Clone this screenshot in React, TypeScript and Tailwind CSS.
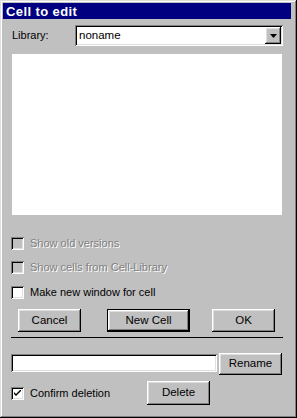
import React from "react";

const raised =
  "shadow-[inset_-1px_-1px_0_#000,inset_1px_1px_0_#fff,inset_-2px_-2px_0_#808080,inset_2px_2px_0_#dfdfdf]";
const sunken =
  "shadow-[inset_1px_1px_0_#808080,inset_-1px_-1px_0_#fff,inset_2px_2px_0_#000,inset_-2px_-2px_0_#dfdfdf]";

function Button({ label, className = "", isDefault = false }: { label: string; className?: string; isDefault?: boolean }) {
  return (
    <button
      className={`flex items-center justify-center bg-[#c0c0c0] text-black text-[11.5px] ${
        isDefault ? "border border-black " + raised : raised
      } ${className}`}
    >
      {label}
    </button>
  );
}

function Checkbox({ label, checked = false, disabled = false }: { label: string; checked?: boolean; disabled?: boolean }) {
  return (
    <div className="flex items-center h-[13px] ml-[11px]">
      <div
        className={`w-[13px] h-[13px] flex items-center justify-center ${sunken} ${
          disabled ? "bg-[#c0c0c0]" : "bg-white"
        }`}
      >
        {checked && (
          <svg width="7" height="7" viewBox="0 0 7 7">
            <path d="M0 2 L0 4 L2 6 L7 1 L7 -1 L2 4 Z" fill="#000" />
          </svg>
        )}
      </div>
      <span
        className={`ml-[6px] text-[11px] leading-none ${
          disabled ? "text-[#808080] [text-shadow:1px_1px_0_#fff]" : "text-black"
        }`}
      >
        {label}
      </span>
    </div>
  );
}

export default function App() {
  return (
    <div
      className="w-[297px] h-[418px] bg-[#c0c0c0] flex flex-col shadow-[inset_-1px_-1px_0_#000,inset_1px_1px_0_#dfdfdf,inset_-2px_-2px_0_#808080,inset_2px_2px_0_#fff]"
      style={{ fontFamily: '"Liberation Sans", Arial, sans-serif' }}
    >
      {/* Title bar */}
      <div className="mt-[3px] ml-[3px] w-[288px] h-[16px] bg-[#000080] flex items-center pl-[3px]">
        <span className="text-white font-bold text-[13px] tracking-[0.4px] leading-none">Cell to edit</span>
      </div>

      {/* Library */}
      <div className="flex items-center mt-[6px] ml-[12px] h-[21px]">
        <span className="w-[63px] text-[11px] text-black">Library:</span>
        <div className={`w-[208px] h-[21px] bg-white flex items-center ${sunken} pl-[4px] pr-[2px]`}>
          <span className="flex-1 text-[11.5px] text-black">noname</span>
          <div className={`w-[16px] h-[17px] bg-[#c0c0c0] flex items-center justify-center ${raised}`}>
            <svg width="7" height="4" viewBox="0 0 7 4">
              <path d="M0 0 H7 L3.5 4 Z" fill="#000" />
            </svg>
          </div>
        </div>
      </div>

      {/* Cell list */}
      <div className="mt-[8px] ml-[12px] w-[270px] h-[161px] bg-white" />

      <div className="mt-[22px]">
        <Checkbox label="Show old versions" disabled />
      </div>
      <div className="mt-[11px]">
        <Checkbox label="Show cells from Cell-Library" disabled />
      </div>
      <div className="mt-[12px]">
        <Checkbox label="Make new window for cell" />
      </div>

      {/* Buttons */}
      <div className="flex mt-[10px] h-[23px]">
        <Button label="Cancel" className="ml-[18px] w-[63px] h-[23px]" />
        <Button label="New Cell" isDefault className="ml-[26px] w-[83px] h-[23px]" />
        <Button label="OK" className="ml-[22px] w-[63px] h-[23px]" />
      </div>

      <div className="mt-[5px] ml-[11px] w-[272px] h-px bg-black" />

      {/* Rename */}
      <div className="flex items-start mt-[15px] ml-[11px]">
        <div className={`mt-[1px] w-[206px] h-[18px] bg-white ${sunken}`} />
        <Button label="Rename" className="ml-[2px] w-[63px] h-[22px]" />
      </div>

      {/* Confirm / Delete */}
      <div className="flex items-center mt-[6px] h-[24px]">
        <div className="w-[147px]">
          <Checkbox label="Confirm deletion" checked />
        </div>
        <Button label="Delete" className="w-[63px] h-[24px]" />
      </div>
    </div>
  );
}
